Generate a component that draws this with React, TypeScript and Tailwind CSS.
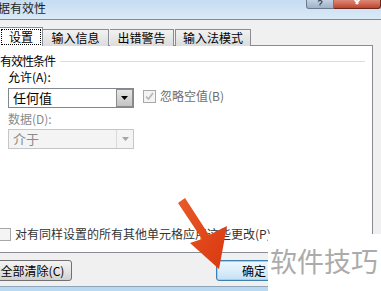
import React from "react";

const font = { fontFamily: '"Noto Sans CJK SC", "Liberation Sans", sans-serif' };

function Tri({ color }: { color: string }) {
  return (
    <svg width="7" height="4" viewBox="0 0 7 4">
      <polygon points="0,0 7,0 3.5,4" fill={color} />
    </svg>
  );
}

function Check({ disabled }: { disabled?: boolean }) {
  return (
    <div className="w-[13px] h-[13px] border border-[#a8a8a8] bg-[#f4f4f4] flex items-center justify-center shrink-0">
      {disabled && (
        <svg width="9" height="9" viewBox="0 0 9 9">
          <polyline points="1,4.5 3.5,7 8,1" fill="none" stroke="#b5b5b5" strokeWidth="1.6" />
        </svg>
      )}
    </div>
  );
}

export default function App() {
  return (
    <div
      className="w-[381px] h-[291px] bg-[#f0f0f0] relative overflow-hidden text-[12px] leading-[14px] text-black"
      style={font}
    >
      {/* title bar */}
      <div className="h-[19px] bg-gradient-to-b from-[#c6dcf2] to-[#dae9f7] flex items-start justify-between">
        <div className="ml-[-2px] mt-[1px] text-[12px] leading-[14px] text-[#1e1e1e]">据有效性</div>
        <div className="flex">
          <div className="w-[28px] h-[9px] rounded-bl-[3px] border border-t-0 border-[#6a7a8c] bg-gradient-to-b from-[#c4d2e2] to-[#9db1c7] flex items-start justify-center overflow-hidden">
            <svg width="6" height="7" viewBox="0 0 6 7">
              <path d="M1,1.5 Q3,-0.5 5,1.5 Q5,3 3,4 L3,5.5" fill="none" stroke="#3a4658" strokeWidth="1.1" />
            </svg>
          </div>
          <div className="w-[47px] h-[9px] rounded-br-[3px] border border-t-0 border-l-0 border-[#6b2a20] bg-gradient-to-b from-[#d98a77] to-[#c2412b] flex items-start justify-center overflow-hidden">
            <svg width="12" height="6" viewBox="0 0 12 6">
              <path d="M2,-3 L7,4 M10,-3 L5,4" stroke="#ffffff" strokeWidth="2" />
            </svg>
          </div>
        </div>
      </div>
      <div className="h-px bg-[#7d8a97]" />

      {/* tabs */}
      <div className="mt-[7px] flex items-end h-[19px] relative z-10">
        <div className="h-[19px] w-[44px] bg-white border border-b-0 border-[#898c95] ml-[-1px] flex items-start pt-[1px] pl-[1px]">
          <div className="w-[40px] h-[16px] border border-dotted border-black flex items-center justify-center">
            设置
          </div>
        </div>
        <div className="h-[17px] w-[66px] border border-l-0 border-b-0 border-[#898c95] bg-gradient-to-b from-[#f2f2f2] to-[#dcdcdc] flex items-center justify-center ml-0">
          输入信息
        </div>
        <div className="h-[17px] w-[64px] border border-l-0 border-b-0 border-[#898c95] bg-gradient-to-b from-[#f2f2f2] to-[#dcdcdc] flex items-center justify-center ml-[1px]">
          出错警告
        </div>
        <div className="h-[17px] w-[76px] border border-b-0 border-[#898c95] bg-gradient-to-b from-[#f2f2f2] to-[#dcdcdc] flex items-center justify-center ml-[1px]">
          输入法模式
        </div>
      </div>

      {/* panel */}
      <div className="mt-[-1px] ml-[-1px] w-[374px] h-[208px] border border-[#898c95] bg-white flex flex-col">
        <div className="mt-[8px] flex items-center">
          <span className="tracking-[-1px]">有效性条件</span>
          <div className="flex-1 h-px bg-[#dddddd] ml-[5px] mr-[7px]" />
        </div>
        <div className="pl-[8px] mt-[2px]">允许(A):</div>
        <div className="pl-[8px] mt-[4px] flex items-start">
          <div className="w-[126px] h-[20px] border border-[#828790] bg-white flex items-center">
            <span className="flex-1 pl-[4px] text-[13px] leading-[16px]">任何值</span>
            <div className="w-[17px] h-[18px] border border-[#8c8c8c] bg-gradient-to-b from-[#e6e6e6] to-[#c4c4c4] flex items-center justify-center">
              <Tri color="#000000" />
            </div>
          </div>
          <div className="ml-[9px] mt-[1px] flex items-center">
            <Check disabled />
            <span className="ml-[4px] text-[#6d6d6d]">忽略空值(B)</span>
          </div>
        </div>
        <div className="pl-[8px] mt-[4px] text-[#8a8a8a]">数据(D):</div>
        <div className="pl-[8px] mt-[3px]">
          <div className="w-[126px] h-[20px] border border-[#c6c6c6] bg-[#f4f4f4] flex items-center">
            <span className="flex-1 pl-[4px] text-[13px] leading-[16px] text-[#8a8a8a]">介于</span>
            <div className="w-[17px] h-[18px] border-l border-[#dadada] bg-[#f4f4f4] flex items-center justify-center">
              <Tri color="#a6a6a6" />
            </div>
          </div>
        </div>
        <div className="mt-auto mb-[11px] ml-[-2px] flex items-center">
          <Check />
          <span className="ml-[4px] text-[#333333]">对有同样设置的所有其他单元格应用这些更改(P)</span>
        </div>
      </div>

      {/* buttons */}
      <div className="mt-[7px] flex">
        <div className="ml-[-7px] w-[79px] h-[21px] rounded-[3px] border border-[#707070] bg-gradient-to-b from-[#f3f3f3] via-[#e6e6e6] to-[#d0d0d0] flex items-center justify-center">
          全部清除(C)
        </div>
        <div className="ml-[144px] w-[76px] h-[21px] rounded-[3px] border border-[#3c7fb1] bg-gradient-to-b from-[#eaf6fd] via-[#dbeefa] to-[#c2e1f5] flex items-center justify-center shadow-[inset_0_0_0_1px_#9ed2f3]">
          确定
        </div>
      </div>
      <div className="mt-[5px] h-px bg-[#8fa6ba]" />
      <div className="h-[10px] bg-[#b9d9f3]" />

      {/* watermark */}
      <div className="absolute left-[268px] top-[234px] w-[113px] h-[57px] bg-white pt-[13px] pl-[2px]">
        <div className="text-[27px] leading-[27px] text-[#ababab] whitespace-nowrap">软件技巧</div>
      </div>

      {/* red arrow */}
      <svg className="absolute left-0 top-0" width="381" height="291" viewBox="0 0 381 291">
        <defs>
          <linearGradient id="ag" x1="0" y1="0" x2="1" y2="1">
            <stop offset="0" stopColor="#e85a2a" />
            <stop offset="1" stopColor="#d9380e" />
          </linearGradient>
        </defs>
        <path
          d="M178,203 L185,198 L209,235 L227,226 L219,269 L190,243 L202,239 Z"
          fill="url(#ag)"
        />
      </svg>
    </div>
  );
}
